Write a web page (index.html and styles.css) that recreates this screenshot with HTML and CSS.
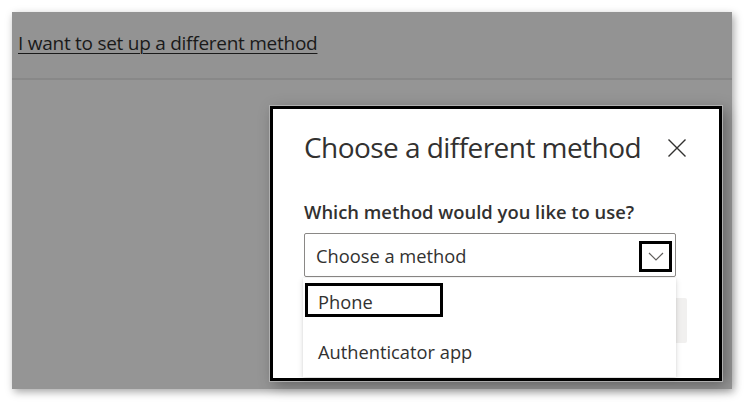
FILE: index.html
```html
<!DOCTYPE html>
<html lang="en">
<head>
<meta charset="utf-8">
<title>Choose a different method</title>
<link rel="stylesheet" href="styles.css">
</head>
<body>
<div class="panel">
  <div class="topbar">
    <a class="link" href="#">I want to set up a different method</a>
  </div>
  <div class="content">
    <div class="dialog" role="dialog">
      <div class="dialog-head">
        <h1 class="title">Choose a different method</h1>
        <button class="close" aria-label="Close">
          <svg width="20" height="20" viewBox="0 0 20 20"><path d="M1.5 1.5 L18.5 18.5 M18.5 1.5 L1.5 18.5" stroke="#323130" stroke-width="1.4" fill="none"/></svg>
        </button>
      </div>
      <div class="label">Which method would you like to use?</div>
      <div class="field">
        <div class="select">
          <span class="select-text">Choose a method</span>
          <span class="chev">
            <svg width="16" height="9" viewBox="0 0 16 9"><path d="M1 1 L8 8 L15 1" stroke="#605e5c" stroke-width="1.2" fill="none"/></svg>
          </span>
        </div>
        <div class="menu">
          <div class="option option-first"><span class="focus">Phone</span></div>
          <div class="option">Authenticator app</div>
        </div>
        <div class="btn"></div>
      </div>
    </div>
  </div>
</div>
</body>
</html>
```

FILE: styles.css
```css
* { box-sizing: border-box; }
html, body { margin: 0; padding: 0; }
body {
  background: #ffffff;
  padding: 12px 18px 18px 12px;
  font-family: "Open Sans", "Noto Sans", sans-serif;
}
.panel {
  width: 720px;
  height: 377px;
  background: #959595;
  box-shadow: 2px 3px 8px rgba(0,0,0,0.35);
  position: relative;
  display: flex;
  flex-direction: column;
}
.topbar {
  height: 68px;
  background: #939393;
  border-bottom: 2px solid #888888;
  padding: 18px 0 0 6px;
}
.link {
  color: #1a1a1a;
  font-size: 19px;
  line-height: 26px;
  letter-spacing: -0.26px;
  text-decoration: underline;
  text-underline-offset: 3px;
  text-decoration-thickness: 1px;
}
.content { flex: 1; position: relative; }
.dialog {
  position: absolute;
  left: 258px;
  top: 26px;
  width: 452px;
  height: 275px;
  background: #ffffff;
  border: 3px solid #000000;
  box-shadow: 0 0 0 1px #b0b0b0, 4px 4px 14px rgba(0,0,0,0.35);
  padding: 20px 32px 0 31px;
  color: #323130;
}
.dialog-head {
  display: flex;
  justify-content: space-between;
  align-items: center;
  height: 36px;
}
.title {
  margin: 0;
  font-size: 28px;
  font-weight: 400;
  line-height: 36px;
  letter-spacing: -0.55px;
}
.close {
  border: 0;
  background: none;
  padding: 0;
  width: 20px;
  height: 20px;
  display: flex;
  margin-top: 2px;
}
.label {
  margin-top: 34px;
  font-size: 18.4px;
  font-weight: 600;
  line-height: 25px;
  letter-spacing: 0;
}
.field {
  position: relative;
  margin-top: 9px;
}
.select {
  width: 372px;
  height: 44px;
  border: 1px solid #8a8886;
  border-radius: 2px;
  display: flex;
  align-items: center;
  justify-content: space-between;
  padding: 0 3px 0 11px;
  font-size: 18.3px;
  position: relative;
  z-index: 1;
  background: #fff;
}
.chev {
  width: 33px;
  height: 31px;
  border: 3px solid #000;
  display: flex;
  align-items: center;
  justify-content: center;
  margin-top: 2px;
}
.menu {
  position: absolute;
  left: -1px;
  top: 45px;
  width: 373px;
  height: 99px;
  background: #ffffff;
  box-shadow: 0 2px 6px rgba(0,0,0,0.14), 0 0 2px rgba(0,0,0,0.08);
  z-index: 2;
  padding-top: 5px;
  font-size: 18.3px;
}
.option {
  padding-left: 15px;
  line-height: 24px;
}
.option-first { padding-left: 2px; height: 57px; }
.focus {
  display: block;
  width: 138px;
  height: 34px;
  border: 3px solid #000;
  padding: 4px 0 0 10px;
  line-height: 24px;
}
.btn {
  position: absolute;
  right: 0;
  top: 65px;
  width: 140px;
  height: 45px;
  background: #f1f0ef;
  border-radius: 2px;
}
```
